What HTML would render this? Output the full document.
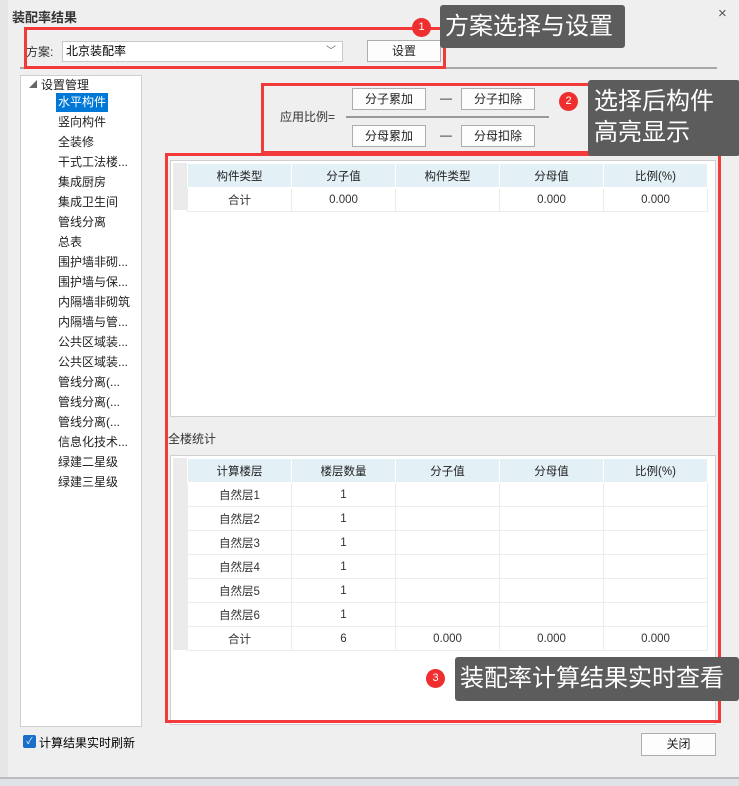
<!DOCTYPE html><html><head><meta charset="utf-8"><style>
*{margin:0;padding:0;box-sizing:border-box}
body{width:739px;height:786px;background:#efefef;font-family:"Liberation Sans","Noto Sans CJK SC",sans-serif;font-size:12px;color:#222;position:relative;overflow:hidden}
.a{position:absolute}
.btn{position:absolute;background:#fdfdfd;border:1px solid #adadad;text-align:center;font-size:12px;line-height:20px}
.red{position:absolute;border:3px solid #f23a3a}
.tip{position:absolute;background:#5c5c5c;color:#fff;font-size:24px;border-radius:3px}
.dot{position:absolute;width:19px;height:19px;border-radius:50%;background:#ef2f2f;color:#fff;font-size:11px;text-align:center;line-height:19px}
.tree div{position:absolute;left:36px;font-size:12px;height:19px;line-height:19px;padding:0 2px}
table{border-collapse:collapse;position:absolute;font-size:11.5px}
td{border:1px solid #ececec;text-align:center;height:24px;width:104px;color:#333}
tr.h td{background:#e3f0f6;border-color:#fff;color:#222}
</style></head><body>
<div class="a" style="left:0;top:0;width:8px;height:778px;background:#e6e6e6"></div>
<div class="a" style="left:12px;top:7px;font-size:13px;font-weight:bold;color:#333">装配率结果</div>
<div class="a" style="left:718px;top:5px;font-size:15px;color:#555">×</div>
<div class="a" style="left:26px;top:43px;color:#333">方案:</div>
<div class="a" style="left:62px;top:41px;width:281px;height:21px;background:#fff;border:1px solid #c8c8c8;padding-left:3px;line-height:19px;color:#000">北京装配率<span style="position:absolute;right:6px;top:0;color:#666;font-size:10px">﹀</span></div>
<div class="btn" style="left:367px;top:40px;width:74px;height:22px">设置</div>
<div class="a" style="left:20px;top:67px;width:697px;height:2px;background:#a8a8a8"></div>
<div class="red" style="left:24px;top:27px;width:422px;height:42px"></div>
<div class="a" style="left:20px;top:75px;width:122px;height:652px;background:#fff;border:1px solid #d0d0d0"></div>
<div class="tree a" style="left:20px;top:75px;width:122px">
<span class="a" style="left:9px;top:4px;font-size:8px;color:#666">◢</span>
<div style="left:19px;top:1px">设置管理</div>
<div style="top:18px;background:#0078d7;color:#fff">水平构件</div>
<div style="top:38px">竖向构件</div><div style="top:58px">全装修</div><div style="top:78px">干式工法楼...</div>
<div style="top:98px">集成厨房</div><div style="top:118px">集成卫生间</div><div style="top:138px">管线分离</div>
<div style="top:158px">总表</div><div style="top:178px">围护墙非砌...</div><div style="top:198px">围护墙与保...</div>
<div style="top:218px">内隔墙非砌筑</div><div style="top:238px">内隔墙与管...</div><div style="top:258px">公共区域装...</div>
<div style="top:278px">公共区域装...</div><div style="top:298px">管线分离(...</div><div style="top:318px">管线分离(...</div>
<div style="top:338px">管线分离(...</div><div style="top:358px">信息化技术...</div><div style="top:378px">绿建二星级</div>
<div style="top:398px">绿建三星级</div>
</div>
<div class="a" style="left:280px;top:108px;color:#333">应用比例=</div>
<div class="btn" style="left:352px;top:88px;width:74px;height:22px">分子累加</div>
<div class="btn" style="left:461px;top:88px;width:74px;height:22px">分子扣除</div>
<div class="btn" style="left:352px;top:125px;width:74px;height:22px">分母累加</div>
<div class="btn" style="left:461px;top:125px;width:74px;height:22px">分母扣除</div>
<div class="a" style="left:440px;top:91px">—</div><div class="a" style="left:440px;top:128px">—</div>
<div class="a" style="left:346px;top:116px;width:203px;height:2px;background:#999"></div>
<div class="red" style="left:261px;top:83px;width:367px;height:71px"></div>
<div class="a" style="left:170px;top:160px;width:546px;height:257px;background:#fff;border:1px solid #d0d0d0"></div>
<div class="a" style="left:173px;top:163px;width:14px;height:47px;background:#ebebeb"></div>
<table style="left:187px;top:163px"><tr class="h"><td>构件类型</td><td>分子值</td><td>构件类型</td><td>分母值</td><td>比例(%)</td></tr>
<tr><td>合计</td><td>0.000</td><td></td><td>0.000</td><td>0.000</td></tr></table>
<div class="a" style="left:168px;top:430px;color:#333">全楼统计</div>
<div class="a" style="left:170px;top:455px;width:546px;height:270px;background:#fff;border:1px solid #d0d0d0"></div>
<div class="a" style="left:173px;top:458px;width:14px;height:192px;background:#ebebeb"></div>
<table style="left:187px;top:458px"><tr class="h"><td>计算楼层</td><td>楼层数量</td><td>分子值</td><td>分母值</td><td>比例(%)</td></tr>
<tr><td>自然层1</td><td>1</td><td></td><td></td><td></td></tr>
<tr><td>自然层2</td><td>1</td><td></td><td></td><td></td></tr>
<tr><td>自然层3</td><td>1</td><td></td><td></td><td></td></tr>
<tr><td>自然层4</td><td>1</td><td></td><td></td><td></td></tr>
<tr><td>自然层5</td><td>1</td><td></td><td></td><td></td></tr>
<tr><td>自然层6</td><td>1</td><td></td><td></td><td></td></tr>
<tr><td>合计</td><td>6</td><td>0.000</td><td>0.000</td><td>0.000</td></tr></table>
<div class="red" style="left:165px;top:153px;width:556px;height:570px"></div>
<div class="a" style="left:23px;top:735px;width:13px;height:13px;background:#1a6fc9;border-radius:2px;color:#fff;font-size:9px;text-align:center;line-height:13px">✓</div>
<div class="a" style="left:39px;top:734px;color:#000">计算结果实时刷新</div>
<div class="btn" style="left:641px;top:733px;width:75px;height:23px">关闭</div>
<div class="a" style="left:0;top:777px;width:739px;height:2px;background:#bbb"></div>
<div class="a" style="left:0;top:779px;width:739px;height:7px;background:#dfe3e8"></div>
<div class="dot" style="left:412px;top:18px">1</div>
<div class="tip" style="left:440px;top:5px;width:185px;height:43px;line-height:43px;padding-left:5px">方案选择与设置</div>
<div class="dot" style="left:559px;top:92px">2</div>
<div class="tip" style="left:588px;top:80px;width:152px;height:76px;line-height:31px;padding:6px 0 0 6px">选择后构件<br>高亮显示</div>
<div class="dot" style="left:426px;top:669px">3</div>
<div class="tip" style="left:455px;top:657px;width:284px;height:44px;line-height:44px;padding-left:5px">装配率计算结果实时查看</div>
</body></html>
